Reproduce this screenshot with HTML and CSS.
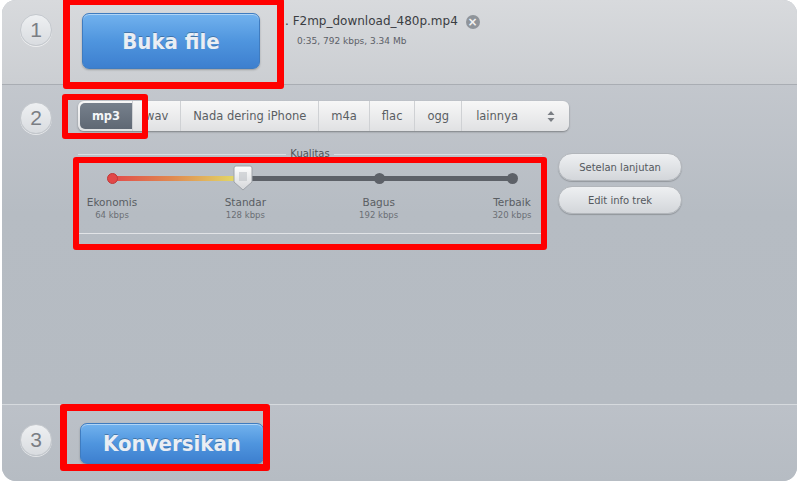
FILE: index.html
```html
<!DOCTYPE html>
<html>
<head>
    <meta name="viewport" content="width=device-width, initial-scale=1.0">
    <title>Konverter Audio</title>
    <link rel="stylesheet" href="styles.css">
</head>
<body>
    <div class="panel">
        <div class="step step-open">
            <div class="num">1</div>
            <button class="big-btn open-btn">Buka file</button>
            <div class="file-info">
                <div class="file-name">. F2mp_download_480p.mp4 <span class="remove">&times;</span></div>
                <div class="file-meta">0:35, 792 kbps, 3.34 Mb</div>
            </div>
        </div>

        <div class="step step-format">
            <div class="num">2</div>
            <div class="format-col">
                <div class="formats">
                    <span class="fmt active">mp3</span>
                    <span class="fmt">wav</span>
                    <span class="fmt">Nada dering iPhone</span>
                    <span class="fmt">m4a</span>
                    <span class="fmt">flac</span>
                    <span class="fmt">ogg</span>
                    <span class="fmt more">lainnya
                        <svg class="arrows" width="8" height="11" viewBox="0 0 8 11">
                            <path d="M4 0 L7.5 4 H0.5 Z M4 11 L7.5 7 H0.5 Z" fill="#7a7e84"/>
                        </svg>
                    </span>
                </div>
                <div class="quality-row">
                    <fieldset class="quality">
                        <legend>Kualitas</legend>
                        <div class="slider">
                            <div class="track">
                                <div class="fill"></div>
                                <span class="dot start"></span>
                                <span class="dot mid"></span>
                                <span class="dot end"></span>
                                <svg class="knob" width="20" height="26" viewBox="0 0 20 26">
                                    <defs>
                                        <linearGradient id="kg" x1="0" y1="0" x2="0" y2="1">
                                            <stop offset="0" stop-color="#ffffff"/>
                                            <stop offset="1" stop-color="#d4d6d9"/>
                                        </linearGradient>
                                    </defs>
                                    <path d="M3 1 H17 Q19 1 19 3 V17 L10 25 L1 17 V3 Q1 1 3 1 Z" fill="url(#kg)" stroke="#9ea3a9" stroke-width="1"/>
                                    <path d="M7 7 V16 M9 7 V16 M11 7 V16 M13 7 V16" stroke="#b5b9be" stroke-width="1"/>
                                </svg>
                            </div>
                        </div>
                        <div class="stops">
                            <div class="stop"><b>Ekonomis</b><small>64 kbps</small></div>
                            <div class="stop"><b>Standar</b><small>128 kbps</small></div>
                            <div class="stop"><b>Bagus</b><small>192 kbps</small></div>
                            <div class="stop"><b>Terbaik</b><small>320 kbps</small></div>
                        </div>
                    </fieldset>
                    <div class="side-btns">
                        <button class="pill">Setelan lanjutan</button>
                        <button class="pill">Edit info trek</button>
                    </div>
                </div>
            </div>
        </div>

        <div class="step step-convert">
            <div class="num">3</div>
            <button class="big-btn convert-btn">Konversikan</button>
        </div>
    </div>

    <!-- penanda merah -->
    <div class="mark mark-open"></div>
    <div class="mark mark-mp3"></div>
    <div class="mark mark-quality"></div>
    <div class="mark mark-convert"></div>
</body>
</html>
```

FILE: styles.css
```css
body {
    margin: 0;
    width: 800px;
    height: 483px;
    background: #ffffff;
    font-family: "DejaVu Sans", Verdana, sans-serif;
    position: relative;
    overflow: hidden;
}

.panel {
    margin: 0 3px 0 2px;
    height: 481px;
    border-radius: 14px;
    overflow: hidden;
    background: #b8bec5;
    display: flex;
    flex-direction: column;
}

.step {
    display: flex;
    align-items: flex-start;
    padding-left: 18px;
}

.num {
    width: 30px;
    height: 30px;
    border-radius: 50%;
    background: linear-gradient(#eef0f2, #d9dce0);
    border: 1px solid #c4c8cd;
    box-shadow: 0 1px 0 rgba(255, 255, 255, 0.6);
    color: #7a7e84;
    font-family: "Liberation Sans", Arial, sans-serif;
    font-size: 21px;
    line-height: 30px;
    text-align: center;
    flex-shrink: 0;
}

.step-open {
    height: 85px;
    padding-top: 13px;
    box-sizing: border-box;
    background: linear-gradient(#d8dadd, #cbced2);
    border-bottom: 1px solid #a9adb3;
}

.step-open .num {
    margin-top: 1px;
}

.big-btn {
    border: 1px solid #3f7cc0;
    border-radius: 7px;
    background: linear-gradient(#72b2ee 0%, #4f95de 50%, #3d7fcf 100%);
    box-shadow: inset 0 1px 0 rgba(255, 255, 255, 0.45), 0 1px 2px rgba(0, 0, 0, 0.25);
    color: #e9eef4;
    font-family: "DejaVu Sans Condensed", "DejaVu Sans", Verdana, sans-serif;
    font-stretch: condensed;
    font-weight: bold;
    text-shadow: 0 -1px 0 rgba(0, 0, 0, 0.25);
    padding: 0;
}

.open-btn {
    width: 178px;
    height: 56px;
    margin-left: 30px;
    font-size: 22px;
}

.file-info {
    margin-left: 25px;
}

.file-name {
    font-size: 12px;
    color: #3a3d42;
    line-height: 16px;
}

.remove {
    display: inline-block;
    width: 14px;
    height: 14px;
    border-radius: 50%;
    background: #8f949a;
    color: #f2f2f2;
    font-size: 12px;
    font-weight: bold;
    line-height: 14px;
    text-align: center;
    margin-left: 4px;
    vertical-align: -1px;
}

.file-meta {
    font-size: 9px;
    color: #5c6067;
    margin-top: 7px;
    margin-left: 12px;
}

.step-format {
    flex: 1;
    padding-top: 16px;
    background: linear-gradient(#c3c7cd, #b6bcc3 40%, #b5bbc2);
    border-bottom: 1px solid #d6dade;
}

.step-format .num {
    margin-top: 1px;
}

.format-col {
    margin-left: 26px;
}

.formats {
    display: flex;
    width: 491px;
    height: 30px;
    border-radius: 6px;
    background: linear-gradient(#f7f7f7, #e0e1e3);
    box-shadow: 0 1px 2px rgba(0, 0, 0, 0.35);
    overflow: hidden;
}

.fmt {
    display: flex;
    align-items: center;
    justify-content: center;
    padding: 0 12px;
    font-size: 11.5px;
    color: #5a5e63;
    border-left: 1px solid #cfd1d4;
}

.fmt:first-child {
    border-left: none;
}

.fmt.active {
    width: 52px;
    padding: 0;
    margin: 2px 0 2px 2px;
    border-radius: 5px 0 0 5px;
    background: linear-gradient(#76808c, #5f6874);
    color: #f4f6f8;
    font-weight: bold;
}

.fmt.more {
    flex: 1;
    justify-content: space-between;
    padding: 0 14px 0 14px;
}

.quality-row {
    display: flex;
    align-items: flex-start;
    margin-top: 18px;
}

.quality {
    width: 464px;
    height: 85px;
    box-sizing: border-box;
    margin: 0;
    padding: 0;
    border: none;
    border-top: 1px solid rgba(255, 255, 255, 0.45);
    border-bottom: 1px solid rgba(255, 255, 255, 0.6);
}

.quality legend {
    margin: -2px auto 0;
    padding: 0 4px;
    font-size: 10px;
    color: #4f5358;
    line-height: 10px;
}

.slider {
    padding: 17px 0 0 34px;
}

.track {
    position: relative;
    width: 400px;
    height: 5px;
    border-radius: 3px;
    background: #5d6168;
}

.fill {
    width: 131px;
    height: 5px;
    border-radius: 3px 0 0 3px;
    background: linear-gradient(90deg, #e24b4b, #e08850 45%, #e2e16a);
}

.dot {
    position: absolute;
    top: -3px;
    width: 11px;
    height: 11px;
    border-radius: 50%;
    background: #5d6168;
}

.dot.start {
    left: -5px;
    background: #e24848;
    border: 1px solid #c03838;
    box-sizing: border-box;
}

.dot.mid {
    left: 262px;
}

.dot.end {
    left: 395px;
}

.knob {
    position: absolute;
    left: 121px;
    top: -11px;
}

.stops {
    display: flex;
    justify-content: space-between;
    width: 460px;
    margin-top: 15px;
    margin-left: 4px;
}

.stop {
    width: 60px;
    text-align: center;
    color: #5a5e63;
}

.stop b {
    display: block;
    font-weight: normal;
    font-size: 10.5px;
    line-height: 13px;
}

.stop small {
    display: block;
    font-size: 8.5px;
    color: #6b6f75;
    margin-top: 1px;
}

.side-btns {
    display: flex;
    flex-direction: column;
    gap: 5px;
    margin-left: 16px;
    margin-top: 4px;
}

.pill {
    width: 124px;
    height: 28px;
    border: 1px solid #b2b6bb;
    border-radius: 14px;
    background: linear-gradient(#eef0f2, #d3d6da);
    box-shadow: 0 1px 1px rgba(0, 0, 0, 0.2);
    font-family: "DejaVu Sans", Verdana, sans-serif;
    font-size: 10px;
    color: #55595e;
    padding: 0;
}

.step-convert {
    height: 76px;
    padding-top: 18px;
    box-sizing: border-box;
    background: linear-gradient(#bcc1c8, #b6bcc3);
}

.step-convert .num {
    margin-top: 1px;
}

.convert-btn {
    width: 184px;
    height: 41px;
    margin-left: 28px;
    font-size: 22px;
}

.mark {
    position: absolute;
    border: 7px solid #ff0000;
    border-radius: 3px;
    box-sizing: border-box;
}

.mark-open {
    left: 63px;
    top: -2px;
    width: 221px;
    height: 91px;
}

.mark-mp3 {
    left: 62px;
    top: 94px;
    width: 86px;
    height: 45px;
    border-width: 6px;
}

.mark-quality {
    left: 73px;
    top: 157px;
    width: 474px;
    height: 93px;
    border-width: 6px;
}

.mark-convert {
    left: 60px;
    top: 404px;
    width: 210px;
    height: 67px;
}
```
